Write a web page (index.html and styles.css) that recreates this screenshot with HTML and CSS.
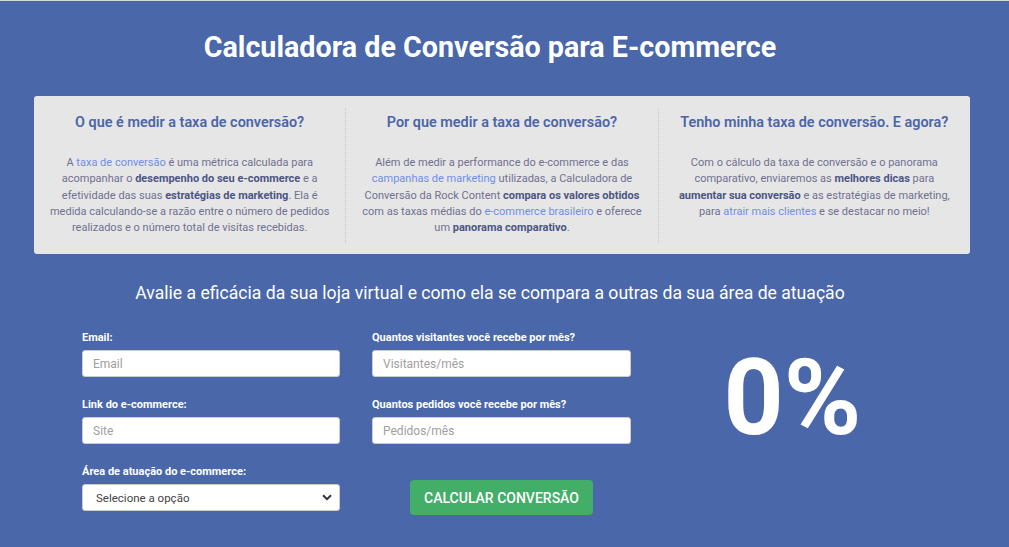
FILE: index.html
```html
<!DOCTYPE html>
<html lang="pt-BR">
<head>
<meta charset="utf-8">
<title>Calculadora de Conversão para E-commerce</title>
<link rel="stylesheet" href="styles.css">
</head>
<body>
<div class="page">
  <h1 class="title">Calculadora de Conversão para E-commerce</h1>
  <div class="info">
    <div class="info-col">
      <h2 class="info-title">O que é medir a taxa de conversão?</h2>
      <p class="info-text">A <a class="lnk">taxa de conversão</a> é uma métrica calculada para acompanhar o <b>desempenho do seu e-commerce</b> e a efetividade das suas <b>estratégias de marketing</b>. Ela é medida calculando-se a razão entre o número de pedidos realizados e o número total de visitas recebidas.</p>
    </div>
    <div class="info-col">
      <h2 class="info-title">Por que medir a taxa de conversão?</h2>
      <p class="info-text">Além de medir a performance do e-commerce e das <a class="lnk">campanhas de marketing</a> utilizadas, a Calculadora de Conversão da Rock Content <b>compara os valores obtidos</b> com as taxas médias do <a class="lnk">e-commerce brasileiro</a> e oferece um <b>panorama comparativo</b>.</p>
    </div>
    <div class="info-col">
      <h2 class="info-title">Tenho minha taxa de conversão. E agora?</h2>
      <p class="info-text">Com o cálculo da taxa de conversão e o panorama comparativo, enviaremos as <b>melhores dicas</b> para <b>aumentar sua conversão</b> e as estratégias de marketing, para <a class="lnk">atrair mais clientes</a> e se destacar no meio!</p>
    </div>
  </div>
  <h3 class="subtitle">Avalie a eficácia da sua loja virtual e como ela se compara a outras da sua área de atuação</h3>
  <div class="form">
    <div class="form-col">
      <div class="field">
        <label class="label">Email:</label>
        <input class="input" type="text" placeholder="Email">
      </div>
      <div class="field">
        <label class="label">Link do e-commerce:</label>
        <input class="input" type="text" placeholder="Site">
      </div>
      <div class="field">
        <label class="label">Área de atuação do e-commerce:</label>
        <div class="select">
          <span>Selecione a opção</span>
          <svg class="chev" width="10" height="7" viewBox="0 0 10 7"><path d="M1 1.2 L5 5.2 L9 1.2" fill="none" stroke="#333" stroke-width="2"/></svg>
        </div>
      </div>
    </div>
    <div class="form-col col2">
      <div class="field">
        <label class="label">Quantos visitantes você recebe por mês?</label>
        <input class="input" type="text" placeholder="Visitantes/mês">
      </div>
      <div class="field">
        <label class="label">Quantos pedidos você recebe por mês?</label>
        <input class="input" type="text" placeholder="Pedidos/mês">
      </div>
      <button class="btn">CALCULAR CONVERSÃO</button>
    </div>
    <div class="result">0%</div>
  </div>
</div>
</body>
</html>
```
FILE: styles.css
```css
* { box-sizing: border-box; }
html, body { margin: 0; padding: 0; }
body {
  background: #4967a9;
  border-top: 1px solid #d9d9d9;
  font-family: Roboto, "Liberation Sans", sans-serif;
  height: 547px;
  overflow: hidden;
}
.page {
  width: 980px;
  padding-top: 29px;
}
.title {
  margin: 0;
  text-align: center;
  color: #fff;
  font-size: 28.7px;
  line-height: 34px;
  font-weight: 700;
}
.info {
  margin: 32px 10px 0 34px;
  background: #e6e6e6;
  border-radius: 3px;
  padding: 12px 0 11px;
  display: flex;
}
.info-col {
  flex: 1;
  padding: 5px 12px 0;
  height: 135px;
  text-align: center;
}
.info-col + .info-col { border-left: 1px dotted #c4c4c4; }
.info-title {
  margin: 0;
  font-size: 14.4px;
  line-height: 20px;
  font-weight: 600;
  color: #4b65a6;
}
.info-text {
  margin: 22px 0 0;
  font-size: 11px;
  line-height: 16.3px;
  color: #70708f;
}
.info-text b { color: #4b5585; font-weight: 700; }
.lnk { color: #6f8ee6; }
.subtitle {
  margin: 27px 0 0;
  text-align: center;
  color: #fff;
  font-size: 17.6px;
  line-height: 24px;
  font-weight: 400;
}
.form {
  display: flex;
  margin-top: 26px;
  padding-left: 82px;
}
.form-col {
  width: 258px;
  display: flex;
  flex-direction: column;
  gap: 21px;
}
.col2 { width: 259px; margin-left: 32px; }
.field { display: flex; flex-direction: column; }
.label {
  color: #fff;
  font-size: 11px;
  font-weight: 700;
  line-height: 14px;
  margin-bottom: 5px;
}
.input, .select {
  height: 27px;
  border: 1px solid #ccc;
  border-radius: 3px;
  background: #fff;
  font-family: inherit;
  font-size: 12px;
  padding: 0 10px;
  color: #333;
  outline: none;
}
.input::placeholder { color: #a0a0a0; }
.select {
  display: flex;
  align-items: center;
  justify-content: space-between;
  padding: 0 7px 0 13px;
  color: #444;
  font-size: 11.5px;
}
.btn {
  align-self: center;
  margin-top: 15px;
  width: 183px;
  height: 35px;
  border: none;
  border-radius: 4px;
  background: #43ae67;
  color: #fff;
  font-family: inherit;
  font-size: 14px;
  font-weight: 500;
  padding: 0;
}
.result {
  flex: 1;
  text-align: center;
  color: #fff;
  font-size: 105px;
  font-weight: 700;
  line-height: 1;
  padding: 15px 26px 0 0;
}
```
